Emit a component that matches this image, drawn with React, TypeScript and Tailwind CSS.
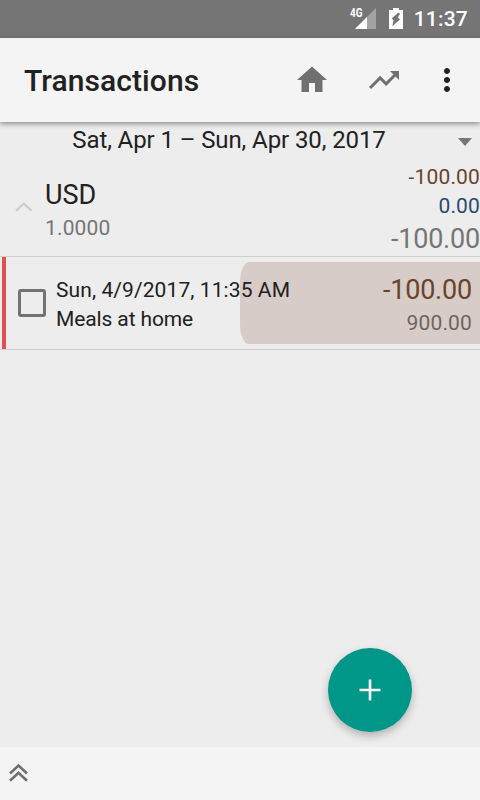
import { ReactNode } from "react";

// 24x24 material glyph
function Icon({
  d,
  size = 36,
  className,
}: {
  d: string;
  size?: number;
  className?: string;
}) {
  return (
    <svg
      width={size}
      height={size}
      viewBox="0 0 24 24"
      fill="currentColor"
      className={`shrink-0 ${className || ""}`}
    >
      <path d={d} />
    </svg>
  );
}

function StatusBar() {
  return (
    <div className="flex h-[38px] shrink-0 items-center justify-end bg-[#757575] pr-3 text-white">
      <svg width="29" height="32" viewBox="-2 -5 29 32" className="shrink-0">
        <path d="M5 21 26 0v21z" fill="#a3a3a3" />
        <path d="M5 21 17 9v12z" fill="#fff" />
        <text
          x="0"
          y="9.4"
          fill="#fff"
          fontSize="12"
          fontWeight="700"
          textLength="12.5"
          lengthAdjust="spacingAndGlyphs"
        >
          4G
        </text>
      </svg>
      <svg
        width="14"
        height="22"
        viewBox="0 0 14 22"
        className="ml-3 shrink-0"
      >
        <path
          fillRule="evenodd"
          fill="#fff"
          d="M4 0h6v2h4v19H0V2h4zM9.5 4.5 2.8 10.2l1.8 2.3-1.4 5.8 8-7-2.4-1.6 2.2-4z"
        />
      </svg>
      <span className="ml-[11px] text-[21px] leading-[38px] font-medium tracking-[0.2px]">
        11:37
      </span>
    </div>
  );
}

function Toolbar() {
  return (
    <header className="relative z-10 flex h-[84px] shrink-0 items-center bg-[#f4f4f4] pl-6 text-[#707070] shadow-[0_2px_5px_rgba(0,0,0,0.4)]">
      <h1 className="flex-1 pt-0.5 text-[30px] leading-9 font-medium tracking-[0.08px] text-[#212121]">
        Transactions
      </h1>
      <Icon d="M10 20v-6h4v6h5v-8h3L12 3 2 12h3v8z" />
      <Icon
        d="M16 6l2.29 2.29-4.88 4.88-4-4L2 16.59 3.41 18l6-6 4 4 6.3-6.29L22 12V6z"
        className="ml-9"
      />
      <Icon
        d="M12 8c1.1 0 2-.9 2-2s-.9-2-2-2-2 .9-2 2 .9 2 2 2zm0 2c-1.1 0-2 .9-2 2s.9 2 2 2 2-.9 2-2-.9-2-2-2zm0 6c-1.1 0-2 .9-2 2s.9 2 2 2 2-.9 2-2-.9-2-2-2z"
        className="mr-[15px] ml-[27px] text-[#212121]"
      />
    </header>
  );
}

function Period({ children }: { children: ReactNode }) {
  return (
    <div className="flex h-9 shrink-0 items-center pr-2">
      <span className="flex-1 text-center text-2xl leading-9 tracking-[-0.1px] text-[#212121]">
        {children}
      </span>
      <svg width="14" height="8" viewBox="0 0 14 8" className="mt-1 shrink-0">
        <path d="M0 0h14L7 8z" fill="#757575" />
      </svg>
    </div>
  );
}

function CurrencySummary() {
  return (
    <section className="flex h-[99px] shrink-0 border-b border-[#cfcfcf]">
      <svg
        width="18"
        height="10"
        viewBox="0 0 18 10"
        className="mt-11 ml-[15px] shrink-0"
      >
        <path
          d="M1 8.7 8.8 1.7 16.6 8.7"
          fill="none"
          stroke="#cdcdcd"
          strokeWidth="2.3"
        />
      </svg>
      <div className="ml-3 flex-1 pt-[19px]">
        <p className="text-[27px] leading-9 text-[#212121]">USD</p>
        <p className="text-[21px] leading-[30px] tracking-[0.15px] text-[#757575]">
          1.0000
        </p>
      </div>
      <div className="pt-[5px] text-right text-[21px] leading-[29px] tracking-[0.15px]">
        <p className="text-[#6b432b]">-100.00</p>
        <p className="text-[#2b4970]">0.00</p>
        <p className="pt-px text-[27px] leading-[35px] tracking-[-0.2px] text-[#757575]">
          -100.00
        </p>
      </div>
    </section>
  );
}

function TransactionRow() {
  return (
    <div className="relative flex h-[93px] shrink-0 border-b border-[#cfcfcf] pl-0.5">
      {/* share of the balance, drawn under the text */}
      <div className="absolute top-[5px] right-0 h-[82px] w-[240px] rounded-l-[9px_20px] bg-[#d7ccc8]" />
      <div className="h-full w-1 bg-[#e05050]" />
      <div className="mt-8 ml-3 h-[28px] w-[28px] shrink-0 rounded-[3px] border-3 border-[#737373]" />
      <div className="relative ml-2.5 flex-1 pt-[19px] text-[21px] leading-[29px] text-[#212121]">
        <p className="tracking-[0.09px]">Sun, 4/9/2017, 11:35 AM</p>
        <p className="tracking-[-0.12px]">Meals at home</p>
      </div>
      <div className="relative pt-[15px] pr-2 text-right">
        <p className="text-[27px] leading-9 tracking-[-0.2px] text-[#6b432b]">
          -100.00
        </p>
        <p className="text-[21px] leading-[30px] tracking-[0.15px] text-[#6b6664]">
          900.00
        </p>
      </div>
    </div>
  );
}

export default function App() {
  return (
    <div className="relative flex h-[800px] w-[480px] flex-col overflow-hidden bg-[#ededed] font-[Roboto,sans-serif]">
      <StatusBar />
      <Toolbar />
      <Period>Sat, Apr 1 – Sun, Apr 30, 2017</Period>
      <CurrencySummary />
      <TransactionRow />
      <main className="flex-1" />
      <footer className="flex h-[53px] shrink-0 items-center bg-[#f4f4f4] pb-0.5 pl-[9px]">
        <svg width="20" height="20" viewBox="0 0 20 20">
          <path
            d="M1 10.5 9.5 2.5 18 10.5M1 17.7 9.5 9.7 18 17.7"
            fill="none"
            stroke="#707070"
            strokeWidth="2.6"
          />
        </svg>
      </footer>
      <button
        type="button"
        className="absolute right-[68px] bottom-[68px] flex h-[84px] w-[84px] items-center justify-center rounded-full bg-[#009688] text-white shadow-[0_4px_8px_rgba(0,0,0,0.25)]"
      >
        <svg width="22" height="22" viewBox="0 0 22 22">
          <path d="M11 0.5v21M0.5 11h21" stroke="#fff" strokeWidth="2.6" />
        </svg>
      </button>
    </div>
  );
}
